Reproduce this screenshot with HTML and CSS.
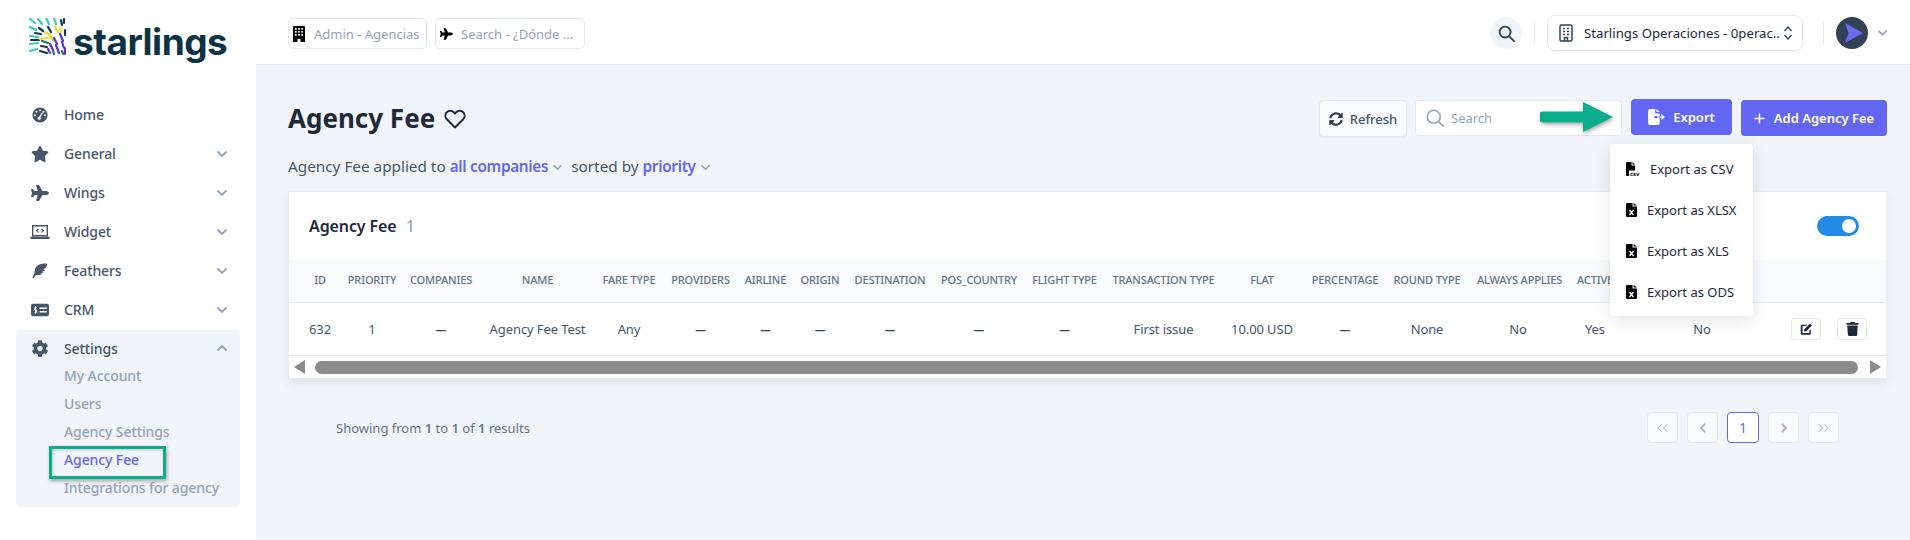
FILE: index.html
```html
<!DOCTYPE html>
<html lang="en">
<head>
<meta charset="utf-8">
<title>Agency Fee</title>
<link rel="stylesheet" href="styles.css">
</head>
<body>
<div class="app">
  <aside class="sidebar">
    <div class="logo">
      <svg class="logo-mark" viewBox="0 0 37 38" fill="none" stroke-width="2.2" stroke-linecap="round">
        <g stroke="#3fc4b8"><path d="M1 1l5 4M9 1l4 5M17 0l3 6M25 0l2 6"/><path d="M1 9l6 3M1 18l8 1M1 26l8-1M1 33l7-2"/></g>
        <g stroke="#0f3a4a"><path d="M32 2l1 5M10 10l4 3M19 9l3 5M6 15l6 1M2 22h8M12 28l6 1M11 33l7 2"/><path d="M35 1v4M36 12v5"/></g>
        <g stroke="#e6df20"><path d="M16 14l5 3M26 9l3 5M11 21l8-1M21 18l3 4M31 10l1 4"/></g>
        <g stroke="#5a34c8"><path d="M25 20l3 6M31 16l3 7M21 26l3 6M27 27l3 8M33 24l2 6M19 31l2 4M36 30v6"/></g>
        <g stroke="#1d6e78"><path d="M13 23l6 2M24 33l1 3M33 33l1 3"/></g>
      </svg>
      <span class="logo-text">starlings</span>
    </div>
    <nav class="nav">
      <a class="nav-item"><svg class="nav-icon" viewBox="0 0 20 20"><circle cx="10" cy="10" r="9.500" fill="#475569"/><g fill="#fff"><circle cx="10" cy="4.200" r="1.200"/><circle cx="5.600" cy="6" r="1.200"/><circle cx="14.400" cy="6" r="1.200"/><circle cx="3.800" cy="10.400" r="1.200"/><circle cx="16.200" cy="10.400" r="1.200"/><circle cx="9" cy="14" r="2"/></g><path d="M9 14l4-7" stroke="#fff" stroke-width="1.500"/></svg><span class="nav-label">Home</span></a>
      <a class="nav-item"><svg class="nav-icon" viewBox="0 0 576 512"><path fill="#475569" d="M259.3 17.8L194 150.2 47.9 171.5c-26.2 3.8-36.7 36.1-17.7 54.6l105.7 103-25 145.5c-4.5 26.3 23.2 46 46.4 33.7L288 439.6l130.7 68.7c23.2 12.2 50.9-7.4 46.4-33.7l-25-145.5 105.7-103c19-18.5 8.5-50.8-17.7-54.6L382 150.2 316.7 17.8c-11.7-23.6-45.6-23.9-57.4 0z"/></svg><span class="nav-label">General</span><svg class="nav-chev" viewBox="0 0 12 8"><path d="M1.500 1.500L6 6l4.500-4.500"/></svg></a>
      <a class="nav-item"><svg class="nav-icon" viewBox="0 0 576 512"><path fill="#475569" d="M480 192H365.71L260.61 8.06A16.014 16.014 0 0 0 246.71 0h-65.5c-10.63 0-18.3 10.17-15.38 20.39L214.86 192H112l-43.2-57.6c-3.02-4.03-7.77-6.4-12.8-6.4H16.01C5.6 128-2.04 137.78.49 147.88L32 256 .49 364.12C-2.04 374.22 5.6 384 16.01 384H56c5.04 0 9.78-2.37 12.8-6.4L112 320h102.86l-49.03 171.6c-2.92 10.22 4.75 20.4 15.38 20.4h65.5c5.74 0 11.04-3.08 13.89-8.06L365.71 320H480c35.35 0 96-28.65 96-64s-60.65-64-96-64z"/></svg><span class="nav-label">Wings</span><svg class="nav-chev" viewBox="0 0 12 8"><path d="M1.500 1.500L6 6l4.500-4.500"/></svg></a>
      <a class="nav-item"><svg class="nav-icon nav-icon-wide" viewBox="0 0 20 14"><path fill="none" stroke="#475569" stroke-width="1.400" d="M2.700.7h14.600v10H2.700z"/><path fill="#475569" d="M0 11.800h20l-1 2.200H1z"/><path fill="none" stroke="#475569" stroke-width="1.100" d="M8.500 3.800L6.500 5.600l2 1.800M11.500 3.800l2 1.800-2 1.800"/></svg><span class="nav-label">Widget</span><svg class="nav-chev" viewBox="0 0 12 8"><path d="M1.500 1.500L6 6l4.500-4.500"/></svg></a>
      <a class="nav-item"><svg class="nav-icon" viewBox="0 0 20 20"><path fill="#475569" d="M19 1c-5-1-10 0-13 3-2 2-3 5-3 9l-2.500 5.500 1.500 1L5 15c3 .5 6 0 8.500-1.500H10l5-2h-2.500L17 8.500h-3L18 5c.7-1.300 1-2.700 1-4z"/></svg><span class="nav-label">Feathers</span><svg class="nav-chev" viewBox="0 0 12 8"><path d="M1.500 1.500L6 6l4.500-4.500"/></svg></a>
      <a class="nav-item"><svg class="nav-icon" viewBox="0 0 20 14"><rect width="20" height="14" rx="2" fill="#475569"/><path d="M9.500 5h8M9.500 9h8" stroke="#fff" stroke-width="1.600"/><path d="M6.200 4.200H4.200v2.800h2v2.800H3.800M5 2.800v8.400" fill="none" stroke="#fff" stroke-width="1"/></svg><span class="nav-label">CRM</span><svg class="nav-chev" viewBox="0 0 12 8"><path d="M1.500 1.500L6 6l4.500-4.500"/></svg></a>
      <div class="nav-group">
        <a class="nav-item nav-item-open"><svg class="nav-icon nav-icon-cog" viewBox="0 0 512 512"><path fill="#475569" d="M487.4 315.7l-42.6-24.6c4.3-23.2 4.3-47 0-70.2l42.6-24.6c4.9-2.8 7.1-8.6 5.5-14-11.1-35.6-30-67.8-54.7-94.6-3.8-4.1-10-5.1-14.8-2.3L380.8 110c-17.9-15.4-38.5-27.3-60.8-35.1V25.8c0-5.6-3.9-10.5-9.4-11.7-36.7-8.2-74.3-7.8-109.2 0-5.5 1.2-9.4 6.1-9.4 11.7V75c-22.2 7.9-42.8 19.8-60.8 35.1L88.7 85.5c-4.9-2.8-11-1.9-14.8 2.3-24.7 26.7-43.6 58.9-54.7 94.6-1.7 5.4.6 11.2 5.5 14L67.3 221c-4.3 23.2-4.3 47 0 70.2l-42.6 24.6c-4.9 2.8-7.1 8.6-5.5 14 11.1 35.6 30 67.8 54.7 94.6 3.8 4.1 10 5.1 14.8 2.3l42.6-24.6c17.9 15.4 38.5 27.3 60.8 35.1v49.2c0 5.6 3.9 10.5 9.4 11.7 36.7 8.2 74.3 7.8 109.2 0 5.5-1.2 9.4-6.1 9.4-11.7v-49.2c22.2-7.9 42.8-19.8 60.8-35.1l42.6 24.6c4.9 2.8 11 1.9 14.8-2.3 24.7-26.7 43.6-58.9 54.7-94.6 1.5-5.5-.7-11.3-5.6-14.1zM256 336c-44.1 0-80-35.9-80-80s35.9-80 80-80 80 35.9 80 80-35.9 80-80 80z"/></svg><span class="nav-label">Settings</span><svg class="nav-chev" viewBox="0 0 12 8"><path d="M1.500 6.500L6 2l4.500 4.500"/></svg></a>
        <a class="sub-item">My Account</a>
        <a class="sub-item">Users</a>
        <a class="sub-item">Agency Settings</a>
        <a class="sub-item sub-item-active">Agency Fee</a>
        <a class="sub-item">Integrations for agency</a>
        <span class="nav-highlight"></span>
      </div>
    </nav>
  </aside>
  <div class="main">
    <header class="topbar">
      <div class="top-field top-field-admin">
        <svg class="top-field-icon" viewBox="0 0 12 16"><path fill="#000" d="M1 0h10a1 1 0 0 1 1 1v15H7.500v-3h-3v3H0V1a1 1 0 0 1 1-1z"/><g fill="#fff"><rect x="2" y="2" width="1.700" height="1.700"/><rect x="5.200" y="2" width="1.700" height="1.700"/><rect x="8.300" y="2" width="1.700" height="1.700"/><rect x="2" y="5" width="1.700" height="1.700"/><rect x="5.200" y="5" width="1.700" height="1.700"/><rect x="8.300" y="5" width="1.700" height="1.700"/><rect x="2" y="8" width="1.700" height="1.700"/><rect x="5.200" y="8" width="1.700" height="1.700"/><rect x="8.300" y="8" width="1.700" height="1.700"/></g></svg>
        <span>Admin - Agencias</span>
      </div>
      <div class="top-field top-field-search">
        <svg class="top-field-icon-plane" viewBox="0 0 576 512"><path fill="#000" d="M480 192H365.71L260.61 8.06A16.014 16.014 0 0 0 246.71 0h-65.5c-10.63 0-18.3 10.17-15.38 20.39L214.86 192H112l-43.2-57.6c-3.02-4.03-7.77-6.4-12.8-6.4H16.01C5.6 128-2.04 137.78.49 147.88L32 256 .49 364.12C-2.04 374.22 5.6 384 16.01 384H56c5.04 0 9.78-2.37 12.8-6.4L112 320h102.86l-49.03 171.6c-2.92 10.22 4.75 20.4 15.38 20.4h65.5c5.74 0 11.04-3.08 13.89-8.06L365.71 320H480c35.35 0 96-28.65 96-64s-60.65-64-96-64z"/></svg>
        <span>Search - ¿Dónde ...</span>
      </div>
      <div class="top-spacer"></div>
      <button class="top-search"><svg viewBox="0 0 18 18" fill="none" stroke="#334155" stroke-width="2"><circle cx="7.500" cy="7.500" r="5.800"/><path d="M12 12l5 5" stroke-linecap="round"/></svg></button>
      <span class="top-divider top-divider-a"></span>
      <div class="company">
        <svg class="company-icon" viewBox="0 0 14 18" fill="none" stroke="#334155" stroke-width="1.500"><rect x="1" y="1" width="12" height="16" rx="1.500"/><path d="M5.500 17v-3.500h3V17M4 4.500h2M8 4.500h2M4 7.500h2M8 7.500h2M4 10.500h2M8 10.500h2"/></svg>
        <span class="company-name">Starlings Operaciones - 0perac..</span>
        <svg class="company-sort" viewBox="0 0 10 16" fill="none" stroke="#334155" stroke-width="1.300"><path d="M1.500 6L5 2l3.500 4M1.500 10L5 14l3.500-4"/></svg>
      </div>
      <span class="top-divider top-divider-b"></span>
      <span class="avatar"><svg viewBox="0 0 32 32"><path fill="#6d6af0" d="M9 6l18 10-18 10 3.500-10z"/></svg></span>
      <svg class="avatar-chev" viewBox="0 0 12 8"><path d="M1.500 1.500L6 6l4.500-4.500"/></svg>
    </header>
    <main class="content">
      <div class="toolbar-row">
        <div class="title-wrap">
          <h1 class="page-title">Agency Fee</h1>
          <svg class="heart" viewBox="0 0 22 20" fill="none" stroke="#1e293b" stroke-width="2"><path d="M11 18.500L2.800 10.300a5 5 0 0 1 0-7 5 5 0 0 1 7 0L11 4.500l1.200-1.200a5 5 0 0 1 7 0 5 5 0 0 1 0 7z" stroke-linejoin="round"/></svg>
        </div>
        <div class="actions">
          <button class="btn-refresh"><svg viewBox="0 0 512 512"><path fill="#334155" d="M370.720 133.280C339.458 104.008 298.888 87.962 255.848 88c-77.458.068-144.328 53.178-162.791 126.850-1.344 5.363-6.122 9.150-11.651 9.150H24.103c-7.498 0-13.194-6.807-11.807-14.176C33.933 94.924 134.813 8 256 8c66.448 0 126.791 26.136 171.315 68.685L463.030 40.970C478.149 25.851 504 36.559 504 57.941V192c0 13.255-10.745 24-24 24H345.941c-21.382 0-32.090-25.851-16.971-40.971l41.750-41.749zM32 296h134.059c21.382 0 32.090 25.851 16.971 40.971l-41.750 41.750c31.262 29.273 71.835 45.319 114.876 45.280 77.418-.070 144.315-53.144 162.787-126.849 1.344-5.363 6.122-9.150 11.651-9.150h57.304c7.498 0 13.194 6.807 11.807 14.176C478.067 417.076 377.187 504 256 504c-66.448 0-126.791-26.136-171.315-68.685L48.970 471.030C33.851 486.149 8 475.441 8 454.059V320c0-13.255 10.745-24 24-24z"/></svg>Refresh</button>
          <div class="search-box">
            <svg viewBox="0 0 18 18" fill="none" stroke="#94a3b8" stroke-width="1.600"><circle cx="7.800" cy="7.800" r="6.500"/><path d="M12.500 12.500l5 5" stroke-linecap="round"/></svg>
            <span>Search</span>
          </div>
          <button class="btn-primary btn-export"><svg viewBox="0 0 20 18"><path fill="#fff" d="M2 0h6v5h5v3H8a1 1 0 0 0 0 2h5v6a2 2 0 0 1-2 2H2a2 2 0 0 1-2-2V2a2 2 0 0 1 2-2zM9.500 0L13 3.500H9.500z"/><path d="M10 9h7M15 6.500L17.800 9 15 11.500" fill="none" stroke="#fff" stroke-width="1.300"/></svg>Export</button>
          <button class="btn-primary btn-add"><svg viewBox="0 0 12 12"><path d="M6 .5v11M.5 6h11" stroke="#fff" stroke-width="1.600"/></svg>Add Agency Fee</button>
        </div>
      </div>
      <p class="subtitle"><span>Agency Fee applied to </span><b class="link">all companies</b><svg class="sub-chev" viewBox="0 0 12 8"><path d="M1.500 1.500L6 6l4.500-4.500"/></svg><span>sorted by </span><b class="link">priority</b><svg class="sub-chev" viewBox="0 0 12 8"><path d="M1.500 1.500L6 6l4.500-4.500"/></svg></p>
      <section class="card">
        <div class="card-head">
          <h2 class="card-title">Agency Fee <span class="card-count">1</span></h2>
          <span class="toggle"><span class="toggle-knob"></span></span>
        </div>
        <table class="table">
          <colgroup>
            <col class="w49"><col class="w65"><col class="w78"><col class="w115"><col class="w68"><col class="w75"><col class="w55"><col class="w54"><col class="w86"><col class="w92"><col class="w79"><col class="w119"><col class="w78"><col class="w88"><col class="w88"><col class="w82"><col class="w72"><col class="w142"><col class="w113">
          </colgroup>
          <thead>
            <tr>
              <th class="col-id">ID</th><th class="col-priority">PRIORITY</th><th>COMPANIES</th><th>NAME</th><th>FARE TYPE</th><th>PROVIDERS</th><th>AIRLINE</th><th>ORIGIN</th><th>DESTINATION</th><th>POS_COUNTRY</th><th>FLIGHT TYPE</th><th>TRANSACTION TYPE</th><th>FLAT</th><th>PERCENTAGE</th><th class="col-round">ROUND TYPE</th><th>ALWAYS APPLIES</th><th>ACTIVE</th><th>AUTO APPLICATION</th><th></th>
            </tr>
          </thead>
          <tbody>
            <tr>
              <td class="col-id">632</td><td class="col-priority">1</td><td class="dash">—</td><td>Agency Fee Test</td><td>Any</td><td class="dash">—</td><td class="dash">—</td><td class="dash">—</td><td class="dash">—</td><td class="dash">—</td><td class="dash">—</td><td>First issue</td><td>10.00 USD</td><td class="dash">—</td><td class="col-round">None</td><td>No</td><td>Yes</td><td>No</td>
              <td>
                <div class="row-actions">
                  <button class="icon-btn"><svg viewBox="0 0 18 18"><path fill="#1e293b" d="M2.500 3H9v2H3.500v9.500H13V10h2v5.500a1.500 1.500 0 0 1-1.500 1.500h-11A1.500 1.500 0 0 1 1 15.500v-11A1.500 1.500 0 0 1 2.500 3z"/><path fill="#1e293b" d="M13.800 1.500l2.700 2.700-7.800 7.800-3.200.5.500-3.200z"/></svg></button>
                  <button class="icon-btn"><svg viewBox="0 0 448 512"><path fill="#1e293b" d="M432 32H312l-9.400-18.700A24 24 0 0 0 281.100 0H166.800a23.720 23.720 0 0 0-21.400 13.300L136 32H16A16 16 0 0 0 0 48v32a16 16 0 0 0 16 16h416a16 16 0 0 0 16-16V48a16 16 0 0 0-16-16zM53.200 467a48 48 0 0 0 47.900 45h245.800a48 48 0 0 0 47.900-45L416 128H32z"/></svg></button>
                </div>
              </td>
            </tr>
          </tbody>
        </table>
        <div class="hscroll">
          <svg class="hscroll-arrow" viewBox="0 0 11 14"><path d="M11 0v14L0 7z"/></svg>
          <span class="hscroll-thumb"></span>
          <svg class="hscroll-arrow" viewBox="0 0 11 14"><path d="M0 0v14l11-7z"/></svg>
        </div>
      </section>
      <div class="pager-row">
        <p class="showing">Showing from <b>1</b> to <b>1</b> of <b>1</b> results</p>
        <div class="pager">
          <span class="page-btn page-faint"><svg viewBox="0 0 14 10"><path d="M6 1L2 5l4 4M12 1L8 5l4 4"/></svg></span>
          <span class="page-btn"><svg class="page-single" viewBox="0 0 6 10"><path d="M5 1L1 5l4 4"/></svg></span>
          <span class="page-btn page-current">1</span>
          <span class="page-btn"><svg class="page-single" viewBox="0 0 6 10"><path d="M1 1l4 4-4 4"/></svg></span>
          <span class="page-btn page-faint"><svg viewBox="0 0 14 10"><path d="M2 1l4 4-4 4M8 1l4 4-4 4"/></svg></span>
        </div>
      </div>
      <svg class="callout-arrow" viewBox="0 0 74 32"><path fill="#0bae8c" d="M3.500 10.500H43V1l30 15-30 15V21.500H3.500a5.500 5.500 0 0 1 0-11z"/></svg>
      <ul class="export-menu">
        <li class="export-item export-csv"><svg viewBox="0 0 14 14"><path fill="#000" d="M1 0h4.500v3.500H9V8.500H3V14H1a1 1 0 0 1-1-1V1a1 1 0 0 1 1-1zM6.500 0L9 2.500H6.500z"/><text x="8.700" y="13.500" class="csv-tag">csv</text></svg>Export as CSV</li>
        <li class="export-item"><svg viewBox="0 0 11 14"><path fill="#000" d="M1 0h5.500v3.500H11V13a1 1 0 0 1-1 1H1a1 1 0 0 1-1-1V1a1 1 0 0 1 1-1zM7.500 0L11 2.500H7.500z"/><path d="M3.500 7l4 5M7.500 7l-4 5" stroke="#fff" stroke-width="1.300"/></svg>Export as XLSX</li>
        <li class="export-item"><svg viewBox="0 0 11 14"><path fill="#000" d="M1 0h5.500v3.500H11V13a1 1 0 0 1-1 1H1a1 1 0 0 1-1-1V1a1 1 0 0 1 1-1zM7.500 0L11 2.500H7.500z"/><path d="M3.500 7l4 5M7.500 7l-4 5" stroke="#fff" stroke-width="1.300"/></svg>Export as XLS</li>
        <li class="export-item"><svg viewBox="0 0 11 14"><path fill="#000" d="M1 0h5.500v3.500H11V13a1 1 0 0 1-1 1H1a1 1 0 0 1-1-1V1a1 1 0 0 1 1-1zM7.500 0L11 2.500H7.500z"/><path d="M3.500 7l4 5M7.500 7l-4 5" stroke="#fff" stroke-width="1.300"/></svg>Export as ODS</li>
      </ul>
    </main>
  </div>
</div>
</body>
</html>
```
FILE: styles.css
```css
* { box-sizing: border-box; }
html, body { margin: 0; height: 100%; overflow: hidden; }
body { font-family: "Noto Sans", "Open Sans", sans-serif; color: #475569; background: #f1f5f9; }
button { font-family: inherit; border: 0; padding: 0; }
svg { display: block; flex: none; }
.app { display: flex; height: 540px; }

.sidebar { width: 256px; flex: none; background: #fff; }
.logo { height: 96px; padding: 18px 0 0 29px; display: flex; align-items: flex-start; }
.logo-mark { width: 37px; height: 38px; }
.logo-text { font-family: "Inter", sans-serif; font-weight: 700; font-size: 37px; line-height: 46px; color: #0a3346; margin: 1px 0 0 7px; letter-spacing: -.5px; }
.nav { margin: 0 16px; }
.nav-item { display: flex; align-items: center; height: 39px; position: relative; padding: 0 12px 2px 8px; font-size: 14px; font-weight: 500; color: #475569; letter-spacing: -.1px; }
.nav-icon { width: 18px; height: 16px; margin: 0 15px 0 7px; }
.nav-icon-wide { width: 20px; height: 14px; margin: 0 14px 0 6px; }
.nav-icon-cog { height: 17px; }
.nav-label { flex: 1; }
.nav-chev { width: 12px; height: 8px; }
.nav-chev path, .avatar-chev path, .sub-chev path { fill: none; stroke: #94a3b8; stroke-width: 1.800; }
.nav-group { background: #f1f5f9; border-radius: 4px; height: 177px; position: relative; }
.nav-item-open { height: 32px; padding-top: 4px; padding-bottom: 0; }
.sub-item { display: block; height: 28px; line-height: 28px; padding-left: 48px; font-size: 14px; font-weight: 500; color: #94a3b8; letter-spacing: -.1px; }
.sub-item-active { color: #6366f1; }
.nav-highlight { position: absolute; left: 33px; top: 116px; width: 117px; height: 33px; border: 3px solid #0bae8c; box-shadow: 1px 2px 4px rgba(0,0,0,.35), inset 1px 1px 3px rgba(0,0,0,.2); }

.main { flex: 1; min-width: 0; display: flex; flex-direction: column; }
.topbar { height: 65px; flex: none; background: #fff; border-bottom: 1px solid #e2e8f0; display: flex; align-items: center; padding: 2px 22px 0 32px; }
.top-field { height: 31px; border: 1px solid #e2e8f0; border-radius: 5px; display: flex; align-items: center; font-size: 13px; color: #94a3b8; margin-top: 1px; white-space: nowrap; overflow: hidden; }
.top-field-admin { width: 139px; padding-left: 4px; }
.top-field-search { width: 150px; margin-left: 8px; padding-left: 4px; }
.top-field-icon { width: 12px; height: 16px; margin-right: 9px; }
.top-field-icon-plane { width: 13px; height: 12px; margin: 0 8px 0 0; }
.top-spacer { flex: 1; }
.top-search { width: 32px; height: 32px; border-radius: 50%; background: #f1f5f9; display: flex; align-items: center; justify-content: center; }
.top-search svg { width: 17px; height: 17px; }
.top-divider { width: 1px; height: 24px; background: #e2e8f0; }
.top-divider-a { margin-left: 12px; margin-right: 12px; }
.top-divider-b { margin-left: 20px; margin-right: 12px; }
.company { width: 256px; height: 36px; border: 1px solid #e2e8f0; border-radius: 8px; display: flex; align-items: center; padding: 0 9px 0 11px; font-size: 13.200px; color: #1e293b; box-shadow: 0 1px 2px rgba(15,23,42,.04); }
.company-icon { width: 14px; height: 18px; margin-right: 11px; }
.company-name { flex: 1; white-space: nowrap; overflow: hidden; }
.company-sort { width: 10px; height: 16px; }
.avatar { width: 32px; height: 32px; border-radius: 50%; background: #334155; }
.avatar-chev { width: 11px; height: 8px; margin-left: 9px; }

.content { flex: 1; position: relative; padding: 35px 23px 0 32px; }
.toolbar-row { display: flex; align-items: flex-start; justify-content: space-between; height: 37px; }
.title-wrap { display: flex; align-items: center; height: 37px; }
.page-title { margin: 0; font-size: 26px; line-height: 37px; font-weight: 700; color: #1e293b; }
.heart { width: 22px; height: 20px; margin-left: 9px; }
.actions { display: flex; align-items: flex-start; }
.btn-refresh { width: 88px; height: 37px; border: 1px solid #e2e8f0; border-radius: 4px; background: #f8fafc; display: flex; align-items: center; justify-content: center; font-size: 13px; font-weight: 500; color: #475569; box-shadow: 0 1px 2px rgba(15,23,42,.05); }
.btn-refresh svg { width: 14px; height: 14px; margin-right: 7px; }
.search-box { width: 207px; height: 36px; margin-left: 8px; background: #fff; border: 1px solid #e2e8f0; border-radius: 4px; display: flex; align-items: center; padding-left: 10px; font-size: 13px; color: #94a3b8; }
.search-box svg { width: 18px; height: 18px; margin-right: 7px; }
.btn-primary { height: 36px; background: #6366f1; color: #fff; border-radius: 4px; display: flex; align-items: center; justify-content: center; font-size: 13px; font-weight: 600; }
.btn-export { width: 101px; margin: -1px 0 0 9px; }
.btn-export svg { width: 18px; height: 16px; margin-right: 7px; }
.btn-add { width: 146px; margin-left: 9px; }
.btn-add svg { width: 11px; height: 11px; margin-right: 9px; }

.subtitle { display: flex; align-items: center; margin: 19px 0 0; height: 20px; font-size: 15.300px; color: #475569; white-space: pre; }
.link { color: #6366f1; font-weight: 600; letter-spacing: -.3px; }
.sub-chev { width: 11px; height: 7px; margin: 2px 8px 0 4px; }

.card { margin-top: 15px; background: #fff; border: 1px solid #e8edf3; box-shadow: 0 4px 10px rgba(15,23,42,.08); height: 188px; }
.card-head { height: 68px; display: flex; align-items: center; justify-content: space-between; padding: 0 27px 0 20px; }
.card-title { margin: 0; font-size: 16px; font-weight: 600; color: #1e293b; letter-spacing: -.1px; }
.card-count { color: #94a3b8; margin-left: 5px; font-weight: 500; }
.toggle { width: 42px; height: 20px; border-radius: 10px; background: #228be6; position: relative; }
.toggle-knob { position: absolute; right: 3px; top: 3px; width: 14px; height: 14px; border-radius: 50%; background: #fff; }

.table { width: 100%; table-layout: fixed; border-collapse: collapse; }
.w49 { width: 48px; } .w65 { width: 65px; } .w78 { width: 78px; } .w115 { width: 115px; } .w68 { width: 68px; }
.w75 { width: 75px; } .w55 { width: 55px; } .w54 { width: 54px; } .w86 { width: 86px; } .w92 { width: 92px; }
.w79 { width: 79px; } .w119 { width: 119px; } .w88 { width: 88px; } .w82 { width: 82px; } .w72 { width: 72px; }
.w142 { width: 142px; } .w113 { width: 113px; }
.table th { height: 42px; background: #f8fafc; border-bottom: 1px solid #e2e8f0; font-size: 11px; font-weight: 500; color: #64748b; white-space: nowrap; text-align: center; padding: 0 0 2px; letter-spacing: -.15px; }
.table td { height: 53px; border-bottom: 1px solid #e2e8f0; font-size: 13px; color: #475569; text-align: center; white-space: nowrap; padding: 0; letter-spacing: -.1px; }
.table .col-id { padding-left: 14px; }
.table .col-priority { padding-left: 5px; }
.table .col-round { padding-right: 12px; }
.table td.dash { color: #334155; font-weight: 700; font-size: 10.500px; }
.row-actions { display: flex; justify-content: flex-end; gap: 16px; padding-right: 19px; }
.icon-btn { width: 30px; height: 22px; background: #fff; border: 1px solid #e2e8f0; border-radius: 4px; display: flex; align-items: center; justify-content: center; }
.icon-btn svg { width: 13px; height: 14px; }
.hscroll { display: flex; align-items: center; height: 23px; padding: 0 5px; }
.hscroll-arrow { width: 11px; height: 14px; fill: #8b8b8b; }
.hscroll-thumb { flex: 1; height: 13px; border-radius: 7px; background: #8b8b8b; margin: 0 12px 0 10px; }

.pager-row { display: flex; align-items: center; justify-content: space-between; margin-top: 33px; height: 31px; padding: 0 48px 0 48px; }
.showing { margin: 0; font-size: 13px; color: #64748b; }
.showing b { font-weight: 600; }
.pager { display: flex; gap: 9px; }
.page-btn { width: 31px; height: 31px; border: 1px solid #e2e8f0; border-radius: 4px; background: #f8fafc; display: flex; align-items: center; justify-content: center; }
.page-btn svg { width: 13px; height: 10px; fill: none; stroke: #a8b3c2; stroke-width: 1.800; }
.page-btn svg.page-single { width: 6px; }
.page-faint svg { stroke: #b6c0cc; stroke-width: 1.100; }
.page-current { background: #fff; border-color: #6366f1; color: #6366f1; font-size: 14px; width: 32px; }

.callout-arrow { position: absolute; left: 1284px; top: 36px; width: 74px; height: 32px; filter: drop-shadow(1px 2px 2px rgba(0,0,0,.35)); }
.export-menu { position: absolute; left: 1354px; top: 79px; width: 143px; height: 172px; margin: 0; padding: 4px 0; list-style: none; background: #fff; border-radius: 4px; box-shadow: 0 4px 16px rgba(15,23,42,.12); }
.export-item { display: flex; align-items: center; height: 41px; padding-left: 16px; font-size: 13px; color: #1e293b; white-space: nowrap; }
.export-item svg { width: 11px; height: 14px; margin-right: 10px; }
.export-csv svg { width: 14px; height: 14px; margin-right: 10px; }
.csv-tag { font-size: 6px; font-weight: 700; fill: #000; text-anchor: middle; }
```
